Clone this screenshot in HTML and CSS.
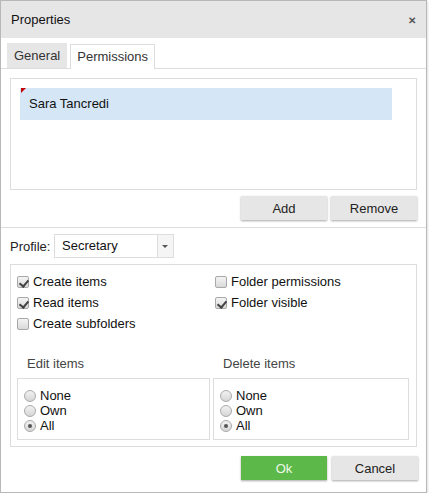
FILE: index.html
```html
<!DOCTYPE html>
<html lang="en">
<head>
    <meta charset="UTF-8">
    <meta name="viewport" content="width=device-width, initial-scale=1.0">
    <title>Properties</title>
    <link rel="stylesheet" href="styles.css">
</head>
<body>
    <div class="dialog">
        <div class="titlebar">
            <span class="title">Properties</span>
            <span class="close">&#x2715;</span>
        </div>

        <div class="tabs">
            <div class="tab">General</div>
            <div class="tab active">Permissions</div>
        </div>

        <div class="tab-body">
            <div class="users">
                <div class="user selected">Sara Tancredi</div>
            </div>
            <div class="actions">
                <button class="btn">Add</button>
                <button class="btn">Remove</button>
            </div>
        </div>

        <div class="perms">
            <div class="profile">
                <label>Profile:</label>
                <div class="select">
                    <span class="select-value">Secretary</span>
                    <span class="select-arrow"></span>
                </div>
            </div>

            <div class="perm-box">
                <div class="checks">
                    <div class="check"><span class="cb on"></span>Create items</div>
                    <div class="check"><span class="cb"></span>Folder permissions</div>
                    <div class="check"><span class="cb on"></span>Read items</div>
                    <div class="check"><span class="cb on"></span>Folder visible</div>
                    <div class="check"><span class="cb"></span>Create subfolders</div>
                </div>

                <div class="groups">
                    <div class="group">
                        <div class="group-title">Edit items</div>
                        <div class="group-box">
                            <div class="radio"><span class="rb"></span>None</div>
                            <div class="radio"><span class="rb"></span>Own</div>
                            <div class="radio"><span class="rb on"></span>All</div>
                        </div>
                    </div>
                    <div class="group">
                        <div class="group-title">Delete items</div>
                        <div class="group-box">
                            <div class="radio"><span class="rb"></span>None</div>
                            <div class="radio"><span class="rb"></span>Own</div>
                            <div class="radio"><span class="rb on"></span>All</div>
                        </div>
                    </div>
                </div>
            </div>
        </div>

        <div class="footer">
            <button class="btn ok">Ok</button>
            <button class="btn">Cancel</button>
        </div>
    </div>
</body>
</html>
```

FILE: styles.css
```css
* {
    box-sizing: border-box;
}

body, html {
    margin: 0;
    background: #fff;
    font-family: 'Liberation Sans', Arial, sans-serif;
    font-size: 13px;
    color: #222;
}

.dialog {
    width: 427px;
    height: 493px;
    border: 1px solid #b8b8b8;
    background: #fff;
    box-shadow: 1px 1px 2px rgba(0,0,0,0.12);
}

.titlebar {
    height: 37px;
    background: #e6e6e6;
    display: flex;
    align-items: center;
    justify-content: space-between;
    padding: 0 10px 0 10px;
}

.title {
    color: #111;
}

.close {
    font-size: 10px;
    font-weight: bold;
    color: #555;
    margin-top: 1px;
}

.tabs {
    display: flex;
    gap: 3px;
    padding: 5px 0 0 6px;
    border-bottom: 1px solid #ddd;
}

.tab {
    height: 25px;
    line-height: 26px;
    padding: 0 7px;
    background: #e6e6e6;
    color: #333;
    margin-bottom: -1px;
}

.tab.active {
    background: #fff;
    border: 1px solid #ddd;
    border-bottom: none;
    height: 25px;
    line-height: 24px;
    margin-top: 1px;
    padding: 0 6px;
}

.tab-body {
    padding: 9px 9px 6px;
    border-bottom: 1px solid #ddd;
}

.users {
    height: 112px;
    border: 1px solid #ddd;
    padding: 9px;
}

.user {
    width: 372px;
    height: 32px;
    line-height: 32px;
    padding-left: 9px;
    position: relative;
    color: #111;
}

.user.selected {
    background: #d5e7f6;
}

.user.selected::before {
    content: "";
    position: absolute;
    top: 0;
    left: 1px;
    border-top: 5px solid #c00000;
    border-right: 5px solid transparent;
}

.actions {
    display: flex;
    justify-content: flex-end;
    gap: 4px;
    margin-top: 6px;
}

.btn {
    width: 86px;
    height: 24px;
    border: none;
    background: #e6e6e6;
    box-shadow: 0 1px 2px rgba(0,0,0,0.35);
    font-family: 'Liberation Sans', Arial, sans-serif;
    font-size: 13px;
    color: #222;
    padding: 0;
    margin-bottom: 1px;
}

.btn.ok {
    background: #5cb949;
    color: #eef8e8;
}

.perms {
    padding: 6px 9px 0;
}

.profile {
    display: flex;
    align-items: center;
}

.profile label {
    width: 44px;
    color: #222;
}

.select {
    width: 120px;
    height: 24px;
    border: 1px solid #ddd;
    display: flex;
}

.select-value {
    flex: 1;
    line-height: 22px;
    padding-left: 7px;
    color: #111;
}

.select-arrow {
    width: 16px;
    border-left: 1px solid #ddd;
    background: #f5f5f5;
    position: relative;
}

.select-arrow::after {
    content: "";
    position: absolute;
    left: 4px;
    top: 10px;
    border-top: 3px solid #555;
    border-left: 3px solid transparent;
    border-right: 3px solid transparent;
}

.perm-box {
    margin-top: 6px;
    height: 183px;
    border: 1px solid #ddd;
    padding: 0 7px 0 6px;
}

.checks {
    display: grid;
    grid-template-columns: 198px 1fr;
    padding-top: 6px;
}

.check {
    display: flex;
    align-items: center;
    height: 21px;
    color: #111;
}

.cb {
    width: 12px;
    height: 12px;
    border: 1px solid #a8a8a8;
    border-radius: 2px;
    background: linear-gradient(#f4f4f4, #d9d9d9);
    margin-right: 4px;
    position: relative;
}

.cb.on::after {
    content: "";
    position: absolute;
    left: 3px;
    top: 1px;
    width: 4px;
    height: 7px;
    border-right: 2px solid #444;
    border-bottom: 2px solid #444;
    transform: rotate(40deg);
}

.groups {
    display: grid;
    grid-template-columns: 193px 196px;
    gap: 3px;
    margin-top: 22px;
}

.group-title {
    color: #444;
    padding-left: 10px;
    height: 22px;
    line-height: 16px;
}

.group-box {
    height: 62px;
    border: 1px solid #ddd;
    padding: 9px 6px 0;
}

.radio {
    display: flex;
    align-items: center;
    height: 15px;
    color: #111;
}

.rb {
    width: 12px;
    height: 12px;
    border: 1px solid #aaa;
    border-radius: 50%;
    background: linear-gradient(#f2f2f2, #d6d6d6);
    margin-right: 4px;
    position: relative;
}

.rb.on::after {
    content: "";
    position: absolute;
    left: 3px;
    top: 3px;
    width: 4px;
    height: 4px;
    border-radius: 50%;
    background: #555;
}

.footer {
    display: flex;
    justify-content: flex-end;
    gap: 5px;
    padding: 9px 8px 0;
}
```
